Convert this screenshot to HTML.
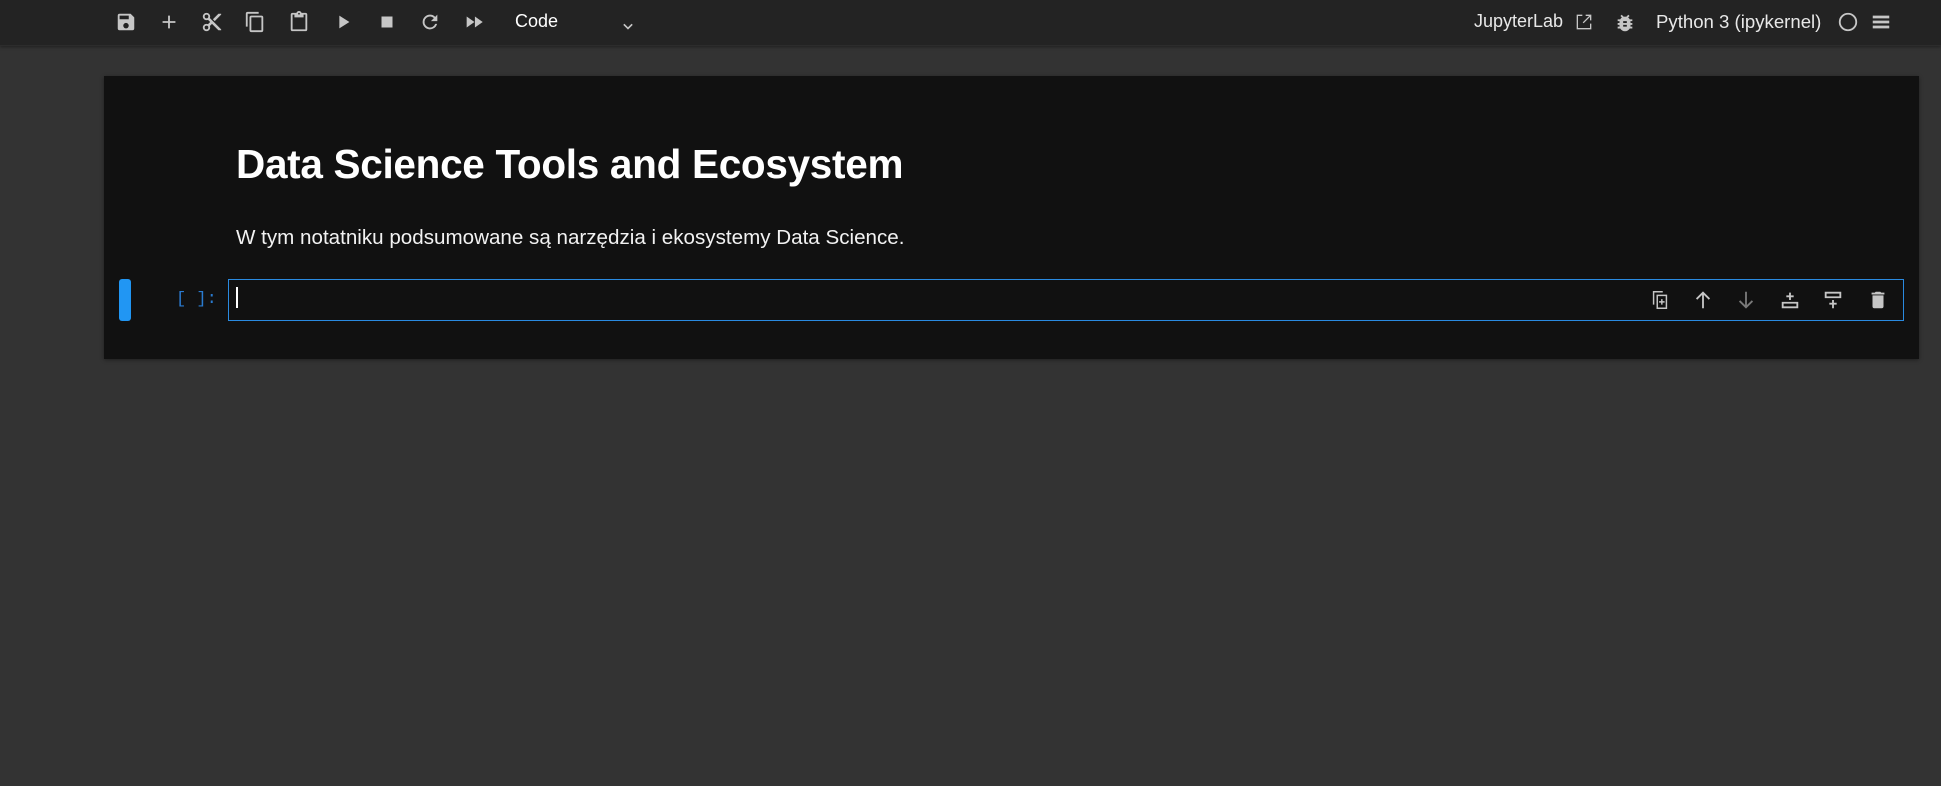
<!DOCTYPE html>
<html><head><meta charset="utf-8"><style>
html,body{margin:0;padding:0;width:1941px;height:786px;overflow:hidden;background:#333333;font-family:"Liberation Sans",sans-serif;}
.tb{position:absolute;left:0;top:0;width:1941px;height:45px;background:#232323;border-bottom:1px solid #2c2c2c;box-shadow:0 1px 3px rgba(0,0,0,.4);}
.ic{position:absolute;top:11px;}
.t{position:absolute;color:#e8e8e8;font-size:18px;top:11px;}
.panel{position:absolute;left:104px;top:76px;width:1815px;height:283px;background:#111111;box-shadow:0 1px 4px rgba(0,0,0,.4);}
h1{position:absolute;left:236px;top:141px;margin:0;color:#fff;font-size:40.5px;font-weight:bold;letter-spacing:-0.3px;}
p.d{position:absolute;left:236px;top:226px;margin:0;color:#f2f2f2;font-size:20.6px;}
.bar{position:absolute;left:119px;top:279px;width:12px;height:42px;background:#2196f3;border-radius:3px;}
.pr{position:absolute;left:176px;top:290px;color:#2a7bd0;font-family:"Liberation Mono",monospace;font-size:17px;}
.cell{position:absolute;left:228px;top:279px;width:1674px;height:40px;border:1px solid #2a8ae0;background:#111;}
.cur{position:absolute;left:236px;top:287px;width:2px;height:21px;background:#fff;}
</style></head><body>
<div class="tb">
<svg class="ic" style="left:115px" width="22" height="22" viewBox="0 0 24 24"><path fill="#c6c6c6" d="M17 3H5a2 2 0 0 0-2 2v14a2 2 0 0 0 2 2h14a2 2 0 0 0 2-2V7zm-5 16a3 3 0 1 1 0-6 3 3 0 0 1 0 6zm3-10H5V5h10z"/></svg>
<svg class="ic" style="left:158px" width="22" height="22" viewBox="0 0 24 24"><path fill="#c6c6c6" d="M19 13h-6v6h-2v-6H5v-2h6V5h2v6h6z"/></svg>
<svg class="ic" style="left:201px" width="22" height="22" viewBox="0 0 24 24"><path fill="#c6c6c6" d="M9.640 7.640c.23-.5.36-1.050.36-1.640 0-2.210-1.790-4-4-4S2 3.790 2 6s1.790 4 4 4c.59 0 1.140-.13 1.640-.36L10 12l-2.360 2.360C7.140 14.130 6.590 14 6 14c-2.210 0-4 1.790-4 4s1.790 4 4 4 4-1.790 4-4c0-.59-.13-1.140-.36-1.640L12 14l7 7h3v-1zM6 8a2 2 0 1 1 0-4 2 2 0 0 1 0 4zm0 12a2 2 0 1 1 0-4 2 2 0 0 1 0 4zM19 3l-6 6 2 2 7-7V3z"/></svg>
<svg class="ic" style="left:244px" width="22" height="22" viewBox="0 0 24 24"><path fill="#c6c6c6" d="M16 1H4a2 2 0 0 0-2 2v14h2V3h12zm3 4H8a2 2 0 0 0-2 2v14a2 2 0 0 0 2 2h11a2 2 0 0 0 2-2V7a2 2 0 0 0-2-2zm0 16H8V7h11z"/></svg>
<svg class="ic" style="left:288px" width="22" height="22" viewBox="0 0 24 24"><path fill="#c6c6c6" d="M19 2h-4.180C14.400.84 13.300 0 12 0S9.600.84 9.180 2H5a2 2 0 0 0-2 2v16a2 2 0 0 0 2 2h14a2 2 0 0 0 2-2V4a2 2 0 0 0-2-2zm-7 0a1 1 0 1 1 0 2 1 1 0 0 1 0-2zm7 18H5V4h2v3h10V4h2z"/></svg>
<svg class="ic" style="left:332px" width="22" height="22" viewBox="0 0 24 24"><path fill="#c6c6c6" d="M8 5v14l11-7z"/></svg>
<svg class="ic" style="left:376px" width="22" height="22" viewBox="0 0 24 24"><path fill="#c6c6c6" d="M6 6h12v12H6z"/></svg>
<svg class="ic" style="left:419px" width="22" height="22" viewBox="0 0 24 24"><path fill="#c6c6c6" d="M17.650 6.350A7.960 7.960 0 0 0 12 4a8 8 0 1 0 7.730 10h-2.080A6 6 0 1 1 12 6c1.660 0 3.140.69 4.220 1.780L13 11h7V4z"/></svg>
<svg class="ic" style="left:463px" width="22" height="22" viewBox="0 0 24 24"><path fill="#c6c6c6" d="M4 18l8.500-6L4 6zm9-12v12l8.500-6z"/></svg>
<div class="t" style="left:515px;color:#fff">Code</div>
<svg class="ic" style="left:618px;top:16px" width="20" height="20" viewBox="0 0 24 24"><path fill="none" stroke="#c6c6c6" stroke-width="2" d="M7 10l5 5 5-5"/></svg>
<div class="t" style="left:1474px">JupyterLab</div>
<svg class="ic" style="left:1574px;top:12px" width="20" height="20" viewBox="0 0 24 24"><path fill="none" stroke="#c6c6c6" stroke-width="1.6" d="M10 4H4v16h16v-6M14 4h6v6M20 4l-9 9"/></svg>
<svg class="ic" style="left:1614px;top:12px" width="22" height="22" viewBox="0 0 24 24"><path fill="#c6c6c6" d="M20 8h-2.810a5.980 5.980 0 0 0-1.820-1.960L17 4.410 15.590 3l-2.170 2.170a6.020 6.020 0 0 0-2.830 0L8.410 3 7 4.410l1.620 1.630C7.880 6.550 7.260 7.220 6.810 8H4v2h2.090c-.05.33-.09.66-.09 1v1H4v2h2v1c0 .34.04.67.09 1H4v2h2.810A5.990 5.990 0 0 0 17.190 18H20v-2h-2.090c.05-.33.09-.66.09-1v-1h2v-2h-2v-1c0-.34-.04-.67-.09-1H20zm-6 8h-4v-2h4zm0-4h-4v-2h4z"/></svg>
<div class="t" style="left:1656px;font-size:18.6px">Python 3 (ipykernel)</div>
<svg class="ic" style="left:1837px;top:11px" width="22" height="22" viewBox="0 0 24 24"><circle cx="12" cy="12" r="9" fill="none" stroke="#c6c6c6" stroke-width="2"/></svg>
<svg class="ic" style="left:1870px;top:11px" width="22" height="22" viewBox="0 0 24 24"><path fill="#c6c6c6" d="M3 5h18v3H3zm0 5.500h18v3H3zM3 16h18v3H3z"/></svg>
</div>
<div class="panel"></div>
<h1>Data Science Tools and Ecosystem</h1>
<p class="d">W tym notatniku podsumowane są narzędzia i ekosystemy Data Science.</p>
<div class="bar"></div>
<div class="pr">[ ]:</div>
<div class="cell"></div>
<div class="cur"></div>
<svg style="position:absolute;left:1649px;top:289px" width="22" height="22" viewBox="0 0 24 24"><path fill="none" stroke="#c6c6c6" stroke-width="1.6" d="M15 3H5v14M9 7h10v14H9zM14 11v6M11 14h6"/></svg>
<svg style="position:absolute;left:1692px;top:289px" width="22" height="22" viewBox="0 0 24 24"><path fill="none" stroke="#c6c6c6" stroke-width="2" d="M12 21V4M5 11l7-7 7 7"/></svg>
<svg style="position:absolute;left:1735px;top:289px" width="22" height="22" viewBox="0 0 24 24"><path fill="none" stroke="#7a7a7a" stroke-width="2" d="M12 3v17M5 13l7 7 7-7"/></svg>
<svg style="position:absolute;left:1779px;top:289px" width="22" height="22" viewBox="0 0 24 24"><path fill="none" stroke="#c6c6c6" stroke-width="2" d="M4 15h16v5H4zM12 4v8M8 8h8"/></svg>
<svg style="position:absolute;left:1822px;top:289px" width="22" height="22" viewBox="0 0 24 24"><path fill="none" stroke="#c6c6c6" stroke-width="2" d="M4 4h16v5H4zM12 12v9M8 16h8"/></svg>
<svg style="position:absolute;left:1867px;top:289px" width="22" height="22" viewBox="0 0 24 24"><path fill="#c6c6c6" d="M6 19a2 2 0 0 0 2 2h8a2 2 0 0 0 2-2V7H6zM19 4h-3.500l-1-1h-5l-1 1H5v2h14z"/></svg>
</body></html>
